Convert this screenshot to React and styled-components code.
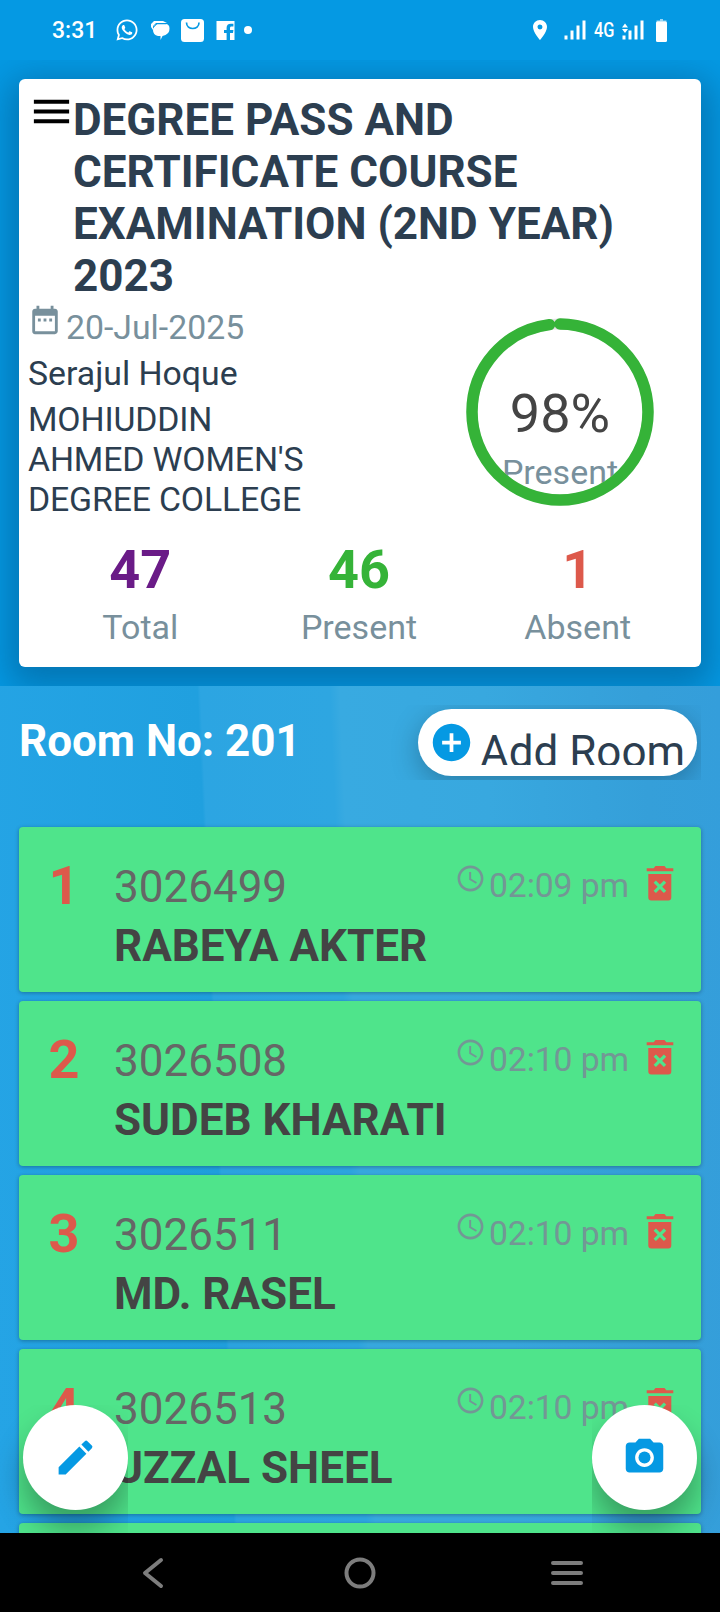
import React from 'react';
import styled, { createGlobalStyle } from 'styled-components';
import {
  MdAccessTime,
  MdAddCircle,
  MdCameraAlt,
  MdDateRange,
  MdEdit,
  MdLocationOn,
  MdMenu,
} from 'react-icons/md';
import { FaWhatsapp } from 'react-icons/fa';

const BLUE = '#0599e3';
const GREEN = '#35b338';
const RED = '#dd594b';
const NAVY = '#2c3e50';
const SLATE = '#78909c';

const GlobalStyle = createGlobalStyle`
  * {
    box-sizing: border-box;
  }

  body {
    margin: 0;
    font-family: Roboto, "Liberation Sans", sans-serif;
    -webkit-font-smoothing: antialiased;
  }

  svg {
    display: block;
    flex-shrink: 0;
  }
`

const Screen = styled.div`
  width: 720px;
  height: 1612px;
  display: flex;
  flex-direction: column;
  overflow: hidden;
`

const Header = styled.header`
  height: 686px;
  flex-shrink: 0;
  background: ${BLUE};
  overflow: hidden;
`

const StatusBar = styled.div`
  height: 60px;
  padding: 0 53px 0 52px;
  display: flex;
  align-items: center;
  justify-content: space-between;
  color: #fff;
`

const StatusGroup = styled.div`
  display: flex;
  align-items: center;
`

const Clock = styled.span`
  width: 63px;
  font-size: 23px;
  line-height: 28px;
  font-weight: 500;
  margin-top: 2px;
`

const Network = styled.span`
  width: 28px;
  margin-left: 8px;
  font-size: 21px;
  line-height: 24px;
  font-weight: 500;
  transform: scaleX(.78);
  transform-origin: left;
`

const CardArea = styled.div`
  height: 626px;
  padding: 19px;
  overflow: hidden;
`

const Card = styled.section`
  height: 588px;
  padding: 13px 9px 0;
  background: #fff;
  border-radius: 6px;
  box-shadow: 0 10px 34px 10px rgba(0, 70, 115, .42);
`

const TitleRow = styled.div`
  height: 208px;
  display: flex;
  align-items: flex-start;

  > svg {
    margin: -4px -2px 0 0;
  }
`

const Title = styled.h1`
  margin: 2px 0 0;
  width: 590px;
  font-size: 44px;
  line-height: 52px;
  font-weight: 700;
  color: ${NAVY};
`

const Summary = styled.div`
  height: 217px;
  display: flex;
  justify-content: space-between;
`

const Info = styled.div`
  width: 300px;
  color: ${NAVY};
  font-size: 33.8px;
  line-height: 40px;

  p {
    margin: 6px 0 0;
  }
`

const College = styled.p`
  letter-spacing: -.15px;
`

const DateLine = styled.div`
  display: flex;
  color: ${SLATE};

  span {
    margin: 8px 0 0 4px;
  }

  svg {
    margin-top: 3px;
  }
`

const Gauge = styled.div`
  width: 188px;
  height: 188px;
  margin: 18px 38px 0 0;
  display: grid;
  justify-items: center;

  > * {
    grid-area: 1 / 1;
  }

  svg {
    z-index: 1;
  }
`

const GaugeText = styled.div`
  padding-top: 64px;
  text-align: center;
  color: ${SLATE};
  font-size: 34px;
  line-height: 40px;

  strong {
    display: block;
    margin-bottom: 6px;
    font-weight: 400;
    font-size: 54px;
    line-height: 64px;
    color: #444;
  }
`

const Stats = styled.div`
  display: grid;
  grid-template-columns: repeat(3, 1fr);
  margin: 21px 5px 0 3px;
`

const Stat = styled.div`
  text-align: center;
  color: ${SLATE};
  font-size: 34px;
  line-height: 40px;

  strong {
    display: block;
    margin-bottom: 5px;
    font-size: 54px;
    line-height: 64px;
    font-weight: 700;
    color: ${({ $color }) => $color};
  }
`

const Body = styled.main`
  position: relative;
  height: 847px;
  flex-shrink: 0;
  overflow: hidden;
  padding: 0 19px;
  background: linear-gradient(87.5deg, #25a4e5 0, #20a0df 234px, #2ca5e2 237px, #2ea6e1 366px, #38aae1 376px, #38a8df 520px, #359fd9 680px, #349edb 756px);
`

const RoomBar = styled.div`
  height: 141px;
  padding-top: 19px;
  display: flex;
  align-items: flex-start;
  justify-content: space-between;
`

const RoomName = styled.h2`
  margin: 10px 0 0;
  font-size: 44px;
  line-height: 52px;
  font-weight: 700;
  color: #fff;
`

const RoomAction = styled.div`
  padding: 4px 4px 4px 60px;
  overflow: hidden;
`

const AddButton = styled.button`
  width: 279px;
  height: 67px;
  padding: 11px 0 11px 11px;
  display: flex;
  border: 0;
  border-radius: 34px;
  background: #fff;
  color: ${NAVY};
  font: 400 44px/52px Roboto, sans-serif;
  box-shadow: 0 8px 28px rgba(0, 0, 0, .26);

  span {
    height: 45px;
    padding-top: 6px;
    margin-left: 6px;
    overflow: hidden;
    white-space: nowrap;
  }
`

const List = styled.ul`
  margin: 0;
  padding: 0;
  list-style: none;
  display: flex;
  flex-direction: column;
  gap: 9px;
`

const Row = styled.li`
  height: 165px;
  padding: 0 27px 0 0;
  display: flex;
  border-radius: 4px;
  background: #4fe48b;
  box-shadow: 0 1px 4px rgba(0, 0, 0, .3);
`

const Index = styled.div`
  width: 90px;
  padding-top: 27px;
  margin-right: 5px;
  text-align: center;
  font-size: 54px;
  line-height: 64px;
  font-weight: 700;
  color: ${RED};
`

const Student = styled.div`
  flex: 1;
  padding-top: 34px;
  font-size: 44px;
  line-height: 52px;
  color: #666;

  strong {
    display: block;
    margin-top: 7px;
    color: #444;
  }
`

const Entry = styled.div`
  display: flex;
  align-items: flex-start;
  padding-top: 36px;
  color: #739795;
  font-size: 33.7px;
  line-height: 40px;

  span {
    width: 160px;
    padding: 3px 0 0 3px;
    white-space: nowrap;
    letter-spacing: -.1px;
  }
`

const FabArea = styled.div`
  position: absolute;
  bottom: 0;
  ${({ $side }) => $side}: 0;
  width: 128px;
  height: 128px;
  display: flex;
  justify-content: ${({ $side }) => ($side === 'left' ? 'flex-end' : 'flex-start')};
  overflow: hidden;
`

const Fab = styled.button`
  width: 105px;
  height: 105px;
  padding: 0;
  display: flex;
  align-items: center;
  justify-content: center;
  border: 0;
  border-radius: 50%;
  background: #fff;
  color: ${BLUE};
  box-shadow: 0 20px 30px rgba(0, 0, 0, .3);
`

const NavBar = styled.nav`
  height: 79px;
  display: grid;
  grid-template-columns: 206px 1fr 206px;
  align-items: center;
  justify-items: center;
  padding: 0 50px;
  background: #000;
`

const LeftIcon = styled.svg`
  margin-left: ${({ $gap = 12 }) => $gap}px;
`

const ChatIcon = () => (
  <LeftIcon width='19' height='20' viewBox='0 0 19 20'>
    <path d='M3 1h9l4 2H5L2 6v4L0 7V4z' fill='#fff' />
    <path d='M6.5 4h8q4 0 4 4.500t-4 6.500l-3 1-2 4v-4H7q-5-1-5-6t4.500-6z' fill='#fff' />
    <path d='M2 8l4-4.200h9' fill='none' stroke={BLUE} strokeWidth='.8' />
  </LeftIcon>
)

const BagIcon = () => (
  <LeftIcon width='23' height='23' viewBox='0 0 23 23' $gap={11}>
    <rect width='23' height='23' rx='3.5' fill='#fff' />
    <path d='M5.5 3.500c0 8 12.500 8 12.500 0' fill='none' stroke={BLUE} strokeWidth='1.7' />
  </LeftIcon>
)

const FacebookIcon = () => (
  <LeftIcon width='19' height='19' viewBox='0 0 19 19'>
    <path fill='#fff' d='M.5 0h18v19h-4.500V12h3l.4-3H14V7.200c0-1 .4-1.700 1.600-1.700h1.800V2.800h-2.500c-2.900 0-4.300 1.600-4.300 4.100V9H8v3h2.600v7H.5z' />
  </LeftIcon>
)

const SignalIcon = ({ arrows }) => (
  <svg width='22' height='20' viewBox='0 0 22 20' fill='#fff'>
    <path d='M.5 15.500h3v4h-3zM6.500 10.500h3v9h-3zM12.500 5.500h3v14h-3zM18.500 .5h3v19h-3z' />
    {arrows && <path d='M0 7.500l3-4 3 4zM0 9l3 4 3-4z' />}
  </svg>
)

const BatteryIcon = () => (
  <LeftIcon width='11' height='23' viewBox='0 0 11 23' fill='#fff'>
    <path opacity='.6' d='M4 0h3v1.500h3.500V4H.5V1.500H4z' />
    <rect y='2.5' width='11' height='20.5' rx='1.5' />
  </LeftIcon>
)

const Trash = styled.svg`
  margin-top: 2px;
`

const TrashIcon = () => (
  <Trash width='28' height='36' viewBox='0 0 28 36' fill={RED}>
    <path d='M.7 3.300h7L9.500 1h9L20.300 3.300h7v3H.7z' />
    <path fillRule='evenodd' d='M2.300 9h23v23.500q0 3-3 3h-17q-3 0-3-3zM9.900 15.500l-2.300 2.300 4 4-4 4 2.300 2.300 4-4 4 4 2.300-2.300-4-4 4-4-2.300-2.300-4 4z' />
  </Trash>
)

const Ring = ({ value }) => {
  const length = 2 * Math.PI * 88
  return (
    <svg width='188' height='188' viewBox='0 0 188 188' fill='none'>
      <circle cx='94' cy='94' r='88' stroke='#e3e3e3' strokeWidth='11' />
      <circle
        cx='94'
        cy='94'
        r='88'
        stroke={GREEN}
        strokeWidth='11.5'
        strokeLinecap='round'
        strokeDasharray={`${(length * value) / 100} ${length}`}
        transform='rotate(-90 94 94)'
      />
    </svg>
  )
}

const students = [
  { roll: '3026499', name: 'RABEYA AKTER', time: '02:09 pm' },
  { roll: '3026508', name: 'SUDEB KHARATI', time: '02:10 pm' },
  { roll: '3026511', name: 'MD. RASEL', time: '02:10 pm' },
  { roll: '3026513', name: 'UZZAL SHEEL', time: '02:10 pm' },
  { roll: '', name: '', time: '' },
]

const App = () => (
  <Screen>
    <GlobalStyle />
    <Header>
      <StatusBar>
        <StatusGroup>
          <Clock>3:31</Clock>
          <FaWhatsapp size={24} />
          <ChatIcon />
          <BagIcon />
          <FacebookIcon />
          <LeftIcon width='8' height='8' $gap={9}>
            <circle cx='4' cy='4' r='4' fill='#fff' />
          </LeftIcon>
        </StatusGroup>
        <StatusGroup>
          <MdLocationOn size={24} />
          <LeftIcon as='i' />
          <SignalIcon />
          <Network>4G</Network>
          <SignalIcon arrows />
          <BatteryIcon />
        </StatusGroup>
      </StatusBar>
      <CardArea>
        <Card>
          <TitleRow>
            <MdMenu size={47} color='#000' />
            <Title>DEGREE PASS AND CERTIFICATE COURSE EXAMINATION (2ND YEAR) 2023</Title>
          </TitleRow>
          <Summary>
            <Info>
              <DateLine>
                <MdDateRange size={34} />
                <span>20-Jul-2025</span>
              </DateLine>
              <p>Serajul Hoque</p>
              <College>MOHIUDDIN AHMED WOMEN'S DEGREE COLLEGE</College>
            </Info>
            <Gauge>
              <GaugeText>
                <strong>98%</strong>
                Present
              </GaugeText>
              <Ring value={97.9} />
            </Gauge>
          </Summary>
          <Stats>
            <Stat $color='#6a1b87'><strong>47</strong>Total</Stat>
            <Stat $color={GREEN}><strong>46</strong>Present</Stat>
            <Stat $color={RED}><strong>1</strong>Absent</Stat>
          </Stats>
        </Card>
      </CardArea>
    </Header>

    <Body>
      <RoomBar>
        <RoomName>Room No: 201</RoomName>
        <RoomAction>
          <AddButton>
            <MdAddCircle size={45} color={BLUE} />
            <span>Add Room</span>
          </AddButton>
        </RoomAction>
      </RoomBar>
      <List>
        {students.map(({ roll, name, time }, i) => (
          <Row key={i}>
            {roll && (
              <>
                <Index>{i + 1}</Index>
                <Student>
                  {roll}
                  <strong>{name}</strong>
                </Student>
                <Entry>
                  <MdAccessTime size={31} />
                  <span>{time}</span>
                  <TrashIcon />
                </Entry>
              </>
            )}
          </Row>
        ))}
      </List>
      <FabArea $side='left'>
        <Fab aria-label='Edit'><MdEdit size={45} /></Fab>
      </FabArea>
      <FabArea $side='right'>
        <Fab aria-label='Camera'><MdCameraAlt size={45} /></Fab>
      </FabArea>
    </Body>

    <NavBar>
      <svg width='32' height='32' fill='none' stroke='#7d7d7d' strokeWidth='4' strokeLinecap='round' strokeLinejoin='round'>
        <path d='M24 3L8 16l16 13' />
      </svg>
      <svg width='32' height='32' fill='none' stroke='#7d7d7d' strokeWidth='4'>
        <circle cx='16' cy='16' r='13.5' />
      </svg>
      <svg width='34' height='32' stroke='#7d7d7d' strokeWidth='4' strokeLinecap='round'>
        <path d='M3 6h28M3 16h28M3 26h28' />
      </svg>
    </NavBar>
  </Screen>
);

export default App;
